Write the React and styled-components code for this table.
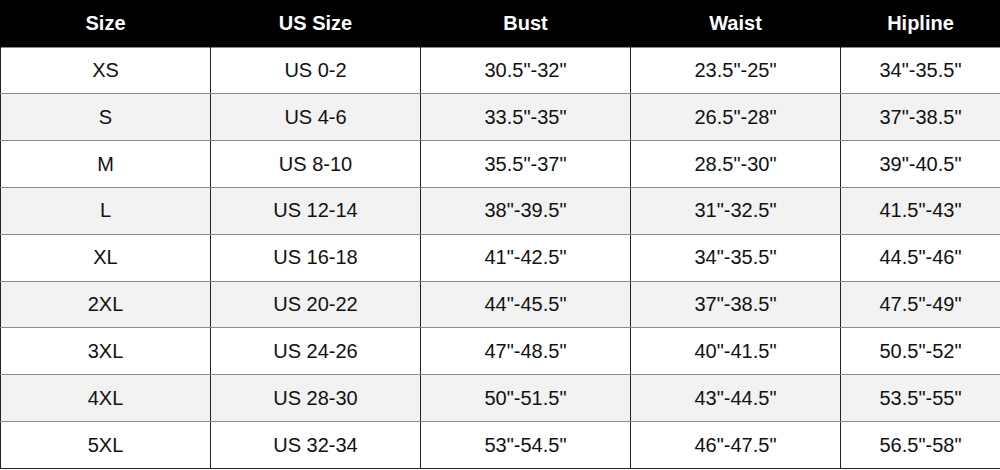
import styled, { createGlobalStyle } from "styled-components";

const GlobalStyle = createGlobalStyle`
  html, body {
    margin: 0;
    padding: 0;
    background: #fff;
  }
`;

const Table = styled.table`
  width: 1000px;
  height: 469px;
  table-layout: fixed;
  border-collapse: collapse;
  font-family: "Liberation Sans", Arial, sans-serif;
  font-size: 20px;
  color: #111;
`;

const HeadCell = styled.th`
  height: 47px;
  padding: 1px 0 0;
  box-sizing: border-box;
  background: #000;
  color: #fff;
  font-weight: 700;
  text-align: center;
  vertical-align: middle;
  border-left: 1px solid #000;
  border-right: 1px solid #000;
`;

const Row = styled.tr`
  background: ${(p) => (p.$shaded ? "#f2f2f2" : "#fff")};
`;

const Cell = styled.td`
  height: 44px;
  padding: 0;
  text-align: center;
  vertical-align: middle;
  border-top: 1px solid #8a8a8a;
  border-bottom: 1px solid #8a8a8a;
  border-left: 1px solid #222;
  border-right: 1px solid #222;

  tr:last-child > & {
    border-bottom-color: #222;
  }
`;

const columns = [
  { label: "Size", width: 210 },
  { label: "US Size", width: 210 },
  { label: "Bust", width: 210 },
  { label: "Waist", width: 210 },
  { label: "Hipline", width: 160 },
];

const rows = [
  ["XS", "US 0-2", '30.5"-32"', '23.5"-25"', '34"-35.5"'],
  ["S", "US 4-6", '33.5"-35"', '26.5"-28"', '37"-38.5"'],
  ["M", "US 8-10", '35.5"-37"', '28.5"-30"', '39"-40.5"'],
  ["L", "US 12-14", '38"-39.5"', '31"-32.5"', '41.5"-43"'],
  ["XL", "US 16-18", '41"-42.5"', '34"-35.5"', '44.5"-46"'],
  ["2XL", "US 20-22", '44"-45.5"', '37"-38.5"', '47.5"-49"'],
  ["3XL", "US 24-26", '47"-48.5"', '40"-41.5"', '50.5"-52"'],
  ["4XL", "US 28-30", '50"-51.5"', '43"-44.5"', '53.5"-55"'],
  ["5XL", "US 32-34", '53"-54.5"', '46"-47.5"', '56.5"-58"'],
];

export default function App() {
  return (
    <>
      <GlobalStyle />
      <Table>
        <colgroup>
          {columns.map((c) => (
            <col key={c.label} style={{ width: c.width }} />
          ))}
        </colgroup>
        <thead>
          <tr>
            {columns.map((c) => (
              <HeadCell key={c.label}>{c.label}</HeadCell>
            ))}
          </tr>
        </thead>
        <tbody>
          {rows.map((r, i) => (
            <Row key={r[0]} $shaded={i % 2 === 1}>
              {r.map((v, j) => (
                <Cell key={j}>{v}</Cell>
              ))}
            </Row>
          ))}
        </tbody>
      </Table>
    </>
  );
}
